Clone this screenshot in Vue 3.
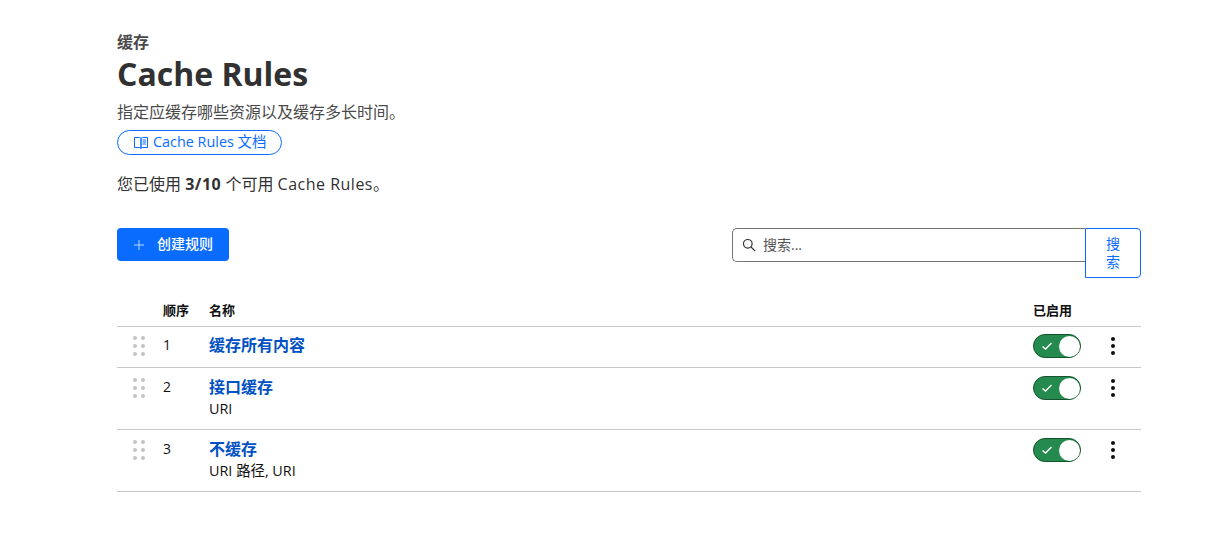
<script setup>
const rules = [
  { n: 1, name: '缓存所有内容', sub: '' },
  { n: 2, name: '接口缓存', sub: 'URI' },
  { n: 3, name: '不缓存', sub: 'URI 路径, URI' },
]
</script>

<template>
  <div class="page">
    <div class="crumb">缓存</div>
    <h1 class="title">Cache Rules</h1>
    <p class="desc">指定应缓存哪些资源以及缓存多长时间。</p>
    <a class="doc">
      <svg width="14" height="14" viewBox="0 0 14 14" fill="none" stroke="#0a6cff" stroke-width="1">
        <path d="M.5 1.500h5c.9 0 1.500.5 1.500 1.200v9.800c0-.6-.6-1-1.500-1h-5z" />
        <path d="M13.500 1.500h-5C7.600 1.500 7 2 7 2.700v9.800c0-.6.6-1 1.500-1h5z" />
        <path d="M8.500 4h3.500M8.500 6h3.500M8.500 8h3.500" />
      </svg>
      <span>Cache Rules 文档</span>
    </a>
    <p class="usage">您已使用 <b class="latin">3/10</b> 个可用 <span class="latin">Cache Rules</span>。</p>

    <div class="toolbar">
      <button class="create">
        <svg width="12" height="12" viewBox="0 0 12 12" stroke="#bcd6ff" stroke-width="1"><path d="M6 1v10M1 6h10" /></svg>
        <span>创建规则</span>
      </button>
      <div class="search">
        <div class="field">
          <svg width="16" height="16" viewBox="0 0 16 16" fill="none" stroke="#333" stroke-width="1.200">
            <circle cx="6.800" cy="6.800" r="4.300" /><path d="M10 10l4.200 4.200" />
          </svg>
          <span>搜索...</span>
        </div>
        <button class="go">搜索</button>
      </div>
    </div>

    <div class="row head">
      <span></span>
      <span>顺序</span>
      <span>名称</span>
      <span>已启用</span>
      <span></span>
    </div>
    <div v-for="r in rules" :key="r.n" class="row item" :class="{ tall: r.sub }">
      <div class="grip"><i v-for="d in 6" :key="d"></i></div>
      <div class="num">{{ r.n }}</div>
      <div class="info">
        <a class="name">{{ r.name }}</a>
        <div v-if="r.sub" class="sub">{{ r.sub }}</div>
      </div>
      <div class="toggle">
        <svg width="12" height="10" viewBox="0 0 12 10" fill="none" stroke="#fff" stroke-width="1.300"><path d="M1.500 5.500l3 2.500 6-6" /></svg>
        <span class="knob"></span>
      </div>
      <div class="more"><i></i><i></i><i></i></div>
    </div>
  </div>
</template>

<style scoped>
.page {
  width: 1024px;
  margin-left: 117px;
  padding-top: 33px;
  font-family: "Open Sans", "Noto Sans CJK SC", sans-serif;
  color: #313131;
  font-size: 16px;
}
.crumb { font-size: 16px; font-weight: 700; line-height: 18px; color: #4a4a4a; }
.title { margin: 0; padding-top: 2px; font-size: 32px; font-weight: 700; line-height: 42px; color: #313131; }
.desc { margin: 7px 0 0; line-height: 20px; color: #4a4a4a; }
.doc {
  display: flex; align-items: center; gap: 5px; font-size: 14.4px;
  width: 165px; height: 25px; box-sizing: border-box; margin-top: 8px; padding: 0 0 5px 16px;
  border: 1px solid #0a6cff; border-radius: 13px; color: #0a6cff;
}
.doc svg { margin-top: 5px; }
.usage { margin: 19px 0 0; line-height: 20px; }
.usage b { font-weight: 700; }
.latin { letter-spacing: .5px; }
.toolbar { display: flex; justify-content: space-between; align-items: flex-start; margin-top: 34px; }
.create {
  display: flex; align-items: center; gap: 12px;
  width: 112px; height: 33px; padding: 0 0 3px 16px; border: 0; border-radius: 4px;
  background: #0a6cff; color: #fff; font: 500 14px "Open Sans", "Noto Sans CJK SC", sans-serif;
}
.create svg { margin-top: 3px; }
.search { display: flex; width: 409px; align-items: flex-start; }
.field {
  flex: 1; height: 34px; box-sizing: border-box; display: flex; align-items: center; gap: 6px; padding: 0 0 2px 8px;
  border: 1px solid #757575; border-right: 0; border-radius: 5px 0 0 5px; color: #555; font-size: 14px;
}
.field svg { margin-top: 2px; }
.go {
  width: 56px; height: 50px; padding: 5px 20px; box-sizing: border-box;
  background: #fff; border: 1px solid #0a6cff; border-radius: 0 4px 4px 0; color: #0a6cff;
  font: 14px/18px "Open Sans", "Noto Sans CJK SC", sans-serif;
}
.row {
  display: grid; grid-template-columns: 46px 46px 1fr 68px 40px;
  border-bottom: 1px solid #c8c8c8;
}
.head { margin-top: 16px; height: 33px; align-items: start; font-size: 13px; font-weight: 700; line-height: 18px; color: #111; padding-top: 7px; box-sizing: border-box; }
.item { height: 40px; box-sizing: content-box; color: #111; font-size: 14px; }
.tall { height: 60px; padding-top: 1px; }
.grip {
  display: grid; grid-template-columns: 4px 4px; gap: 4px 4px; justify-content: start;
  margin: 9px 0 0 16px; align-content: start;
}
.grip i { width: 4px; height: 4px; border-radius: 50%; background: #c4c4c4; }
.num { padding-top: 8px; line-height: 20px; }
.info { padding-top: 6px; }
.name { display: block; font-size: 16px; line-height: 24px; font-weight: 700; color: #0051c3; }
.sub { font-size: 14.4px; line-height: 20px; margin-top: 0; }
.toggle {
  position: relative; width: 48px; height: 24px; box-sizing: border-box; margin-top: 7px;
  border: 1px solid #14532d; border-radius: 12px; background: #258a4d;
  display: flex; align-items: center; padding-left: 7px;
}
.knob {
  position: absolute; right: 0; top: 0; width: 21px; height: 21px; margin: .5px; border-radius: 50%; background: #fff;
}
.more { display: flex; flex-direction: column; align-items: center; gap: 3px; width: 8px; margin: 10px 0 0 8px; }
.more i { width: 4px; height: 4px; border-radius: 50%; background: #111; }
</style>
